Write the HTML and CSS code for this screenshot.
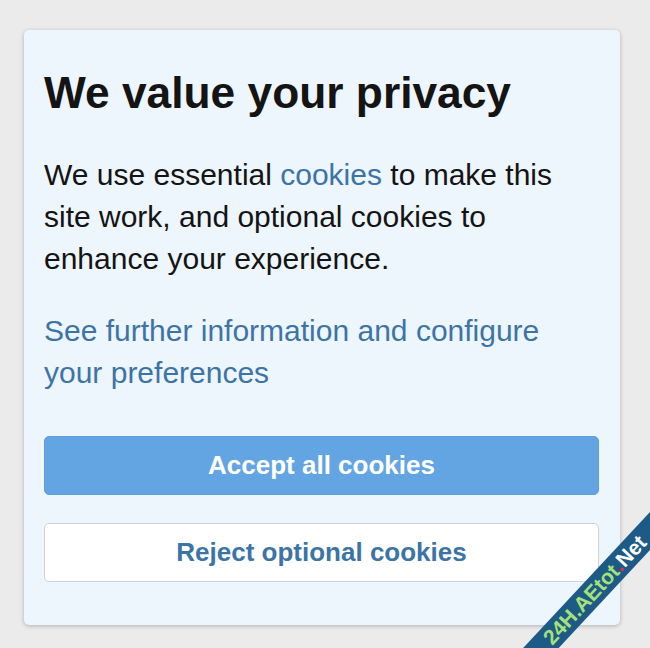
FILE: index.html
```html
<!DOCTYPE html>
<html lang="en">
<head>
<meta charset="utf-8">
<title>We value your privacy</title>
<link rel="stylesheet" href="styles.css">
</head>
<body>
<div class="page">
  <section class="card">
    <h1 class="title">We value your privacy</h1>
    <p class="text">We use essential <a class="link" href="#">cookies</a> to make this site work, and optional cookies to enhance your experience.</p>
    <p class="text text-link"><a class="link" href="#">See further information and configure your preferences</a></p>
    <div class="actions">
      <button class="btn btn-primary">Accept all cookies</button>
      <button class="btn btn-secondary">Reject optional cookies</button>
    </div>
  </section>
</div>
<div class="ribbon"><span class="rb-green">24H.AEtot</span><span class="rb-dot">.</span><span class="rb-white">Net</span></div>
</body>
</html>
```
FILE: styles.css
```css
html, body {
  margin: 0;
  padding: 0;
  overflow: hidden;
}
body {
  background: #ebebeb;
  font-family: "Liberation Sans", Arial, sans-serif;
  width: 650px;
  height: 648px;
  position: relative;
}
.page {
  padding: 30px 30px 0 24px;
}
.card {
  box-sizing: border-box;
  width: 596px;
  height: 595px;
  background: #edf5fd;
  border-radius: 5px;
  box-shadow: 0 1px 4px rgba(0,0,0,0.25);
  padding: 37px 21px 20px 20px;
}
.title {
  margin: 0 0 35px 0;
  font-size: 44.3px;
  line-height: 52px;
  font-weight: 700;
  color: #141414;
}
.text {
  margin: 0 0 30px 0;
  font-size: 30px;
  line-height: 42px;
  color: #141414;
}
.text-link {
  margin-bottom: 42px;
}
.link {
  color: #3d74a6;
  text-decoration: none;
}
.actions {
  display: flex;
  flex-direction: column;
  gap: 28px;
}
.btn {
  display: block;
  width: 100%;
  height: 59px;
  border-radius: 5px;
  font-family: "Liberation Sans", Arial, sans-serif;
  font-size: 26px;
  font-weight: 700;
  cursor: pointer;
  padding: 0;
}
.btn-primary {
  background: #63a5e2;
  color: #ffffff;
  border: 1px solid #5d9edb;
}
.btn-secondary {
  background: #ffffff;
  color: #3d74a6;
  border: 1px solid #d2d2d2;
}
.ribbon {
  position: absolute;
  left: 460px;
  top: 577px;
  width: 270px;
  height: 26px;
  background: #1d5a86;
  transform: rotate(-47deg);
  transform-origin: center;
  text-align: center;
  line-height: 26px;
  font-size: 21px;
  font-weight: 700;
  font-family: "Liberation Sans", Arial, sans-serif;
}
.rb-green { color: #a6e07a; }
.rb-dot { color: #e0303a; }
.rb-white { color: #ffffff; }
```
